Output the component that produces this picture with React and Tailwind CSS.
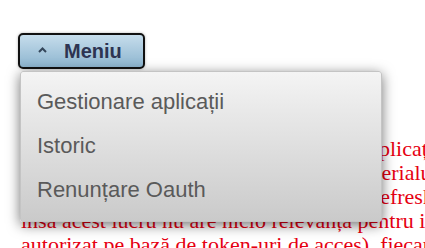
import React from 'react'

const lines = [
  'Atenție! când retrageți tot accesul unor aplicații, acestea',
  'și nu va mai avea acces la conținutul materialului dumneavoastră,',
  'deci ele vor fi invalidate, chiar și cel de refresh token,',
  'însă acest lucru nu are nicio relevanță pentru identitatea',
  'autorizat pe bază de token-uri de acces), fiecare aplicație',
]

const menuItems = ['Gestionare aplicații', 'Istoric', 'Renunțare Oauth']

export default function App() {
  return (
    <div className="relative w-[425px] h-[248px] overflow-hidden bg-white pt-[33px] pl-[18px]">
      {/* toggle button */}
      <button className="flex items-center w-[127px] h-[36px] pl-[18px] gap-[17px] border-2 border-[#111] rounded-[5px] bg-gradient-to-b from-[#c6ddec] to-[#8db5cf] shadow-[0_0_3px_rgba(0,0,0,0.3)]">
        <svg width="9" height="6" viewBox="0 0 9 6" className="-mt-[2px]">
          <path d="M1 5 L4.5 1.5 L8 5" fill="none" stroke="#34465a" strokeWidth="2" />
        </svg>
        <span className="text-[20px] font-bold text-[#2d3452] leading-none" style={{ fontFamily: '"Liberation Sans", Arial, sans-serif' }}>
          Meniu
        </span>
      </button>

      {/* page text behind the menu */}
      <div
        className="mt-[68px] ml-[3px] text-[22px] leading-[24px] text-[#e60012] whitespace-nowrap"
        style={{ fontFamily: '"Liberation Serif", "Times New Roman", serif' }}
      >
        {lines.map((l) => (
          <div key={l}>{l}</div>
        ))}
      </div>

      {/* dropdown */}
      <div className="absolute left-[20px] top-[71px] w-[362px] h-[151px] py-[8px] border border-[#c4c4c4] rounded-[3px] bg-gradient-to-b from-[#f4f4f4] to-[#cacaca] shadow-[0_3px_13px_rgba(0,0,0,0.55)]">
        {menuItems.map((m) => (
          <div
            key={m}
            className="h-[44px] leading-[44px] pl-[16px] text-[22px] text-[#5a5a5a]"
            style={{ fontFamily: '"Liberation Sans", Arial, sans-serif' }}
          >
            {m}
          </div>
        ))}
      </div>
    </div>
  )
}
